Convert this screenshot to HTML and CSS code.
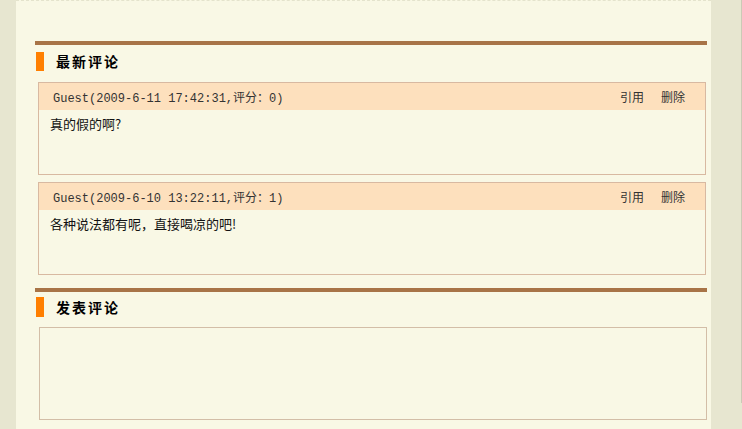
FILE: index.html
```html
<!DOCTYPE html>
<html lang="zh">
<head>
<meta charset="utf-8">
<title>评论</title>
<link rel="stylesheet" href="styles.css">
</head>
<body>
<div class="page">
  <aside class="side-left"></aside>
  <main class="main">
    <section class="block block--first">
      <div class="block-rule"></div>
      <h2 class="block-title">最新评论</h2>
      <div class="comment">
        <div class="comment-head">
          <span class="comment-meta">Guest(2009-6-11 17:42:31,评分：0)</span>
          <span class="comment-actions"><a class="action">引用</a><a class="action">删除</a></span>
        </div>
        <div class="comment-body">真的假的啊?</div>
      </div>
      <div class="comment">
        <div class="comment-head">
          <span class="comment-meta">Guest(2009-6-10 13:22:11,评分：1)</span>
          <span class="comment-actions"><a class="action">引用</a><a class="action">删除</a></span>
        </div>
        <div class="comment-body">各种说法都有呢，直接喝凉的吧!</div>
      </div>
    </section>
    <section class="block">
      <div class="block-rule"></div>
      <h2 class="block-title block-title--form">发表评论</h2>
      <div class="post-box"></div>
    </section>
  </main>
  <aside class="side-right"><div class="rail"></div></aside>
</div>
</body>
</html>
```
FILE: styles.css
```css
html, body {
  margin: 0;
  padding: 0;
  background: #e7e6d0;
  height: 100%;
}
body {
  font-family: "Noto Sans CJK SC", "Liberation Sans", sans-serif;
  color: #222;
}
.page {
  display: flex;
  width: 742px;
  height: 429px;
  overflow: hidden;
}
.side-left {
  width: 16px;
  flex: none;
  background: #e7e6d0;
}
.main {
  width: 695px;
  flex: none;
  box-sizing: border-box;
  background: #f9f8e5;
  border-top: 1px dashed #e4e3cc;
  padding: 40px 4px 0 19px;
}
.side-right {
  width: 31px;
  flex: none;
  display: flex;
  justify-content: flex-end;
  background: #e7e6d0;
}
.rail {
  width: 1px;
  height: 403px;
  background: #cbcab6;
}
.block {
  margin-top: 13px;
}
.block--first {
  margin-top: 0;
}
.block-rule {
  height: 4px;
  background: #a87447;
}
.block-title {
  margin: 7px 0 11px 1px;
  height: 19px;
  line-height: 19px;
  border-left: 8px solid #ff7f00;
  padding-left: 12px;
  font-size: 14px;
  font-weight: bold;
  letter-spacing: 2px;
  color: #000;
}
.block-title--form {
  margin-top: 5px;
  height: 20px;
  line-height: 20px;
  margin-bottom: 10px;
}
.comment {
  margin: 0 1px 7px 3px;
  border: 1px solid #d8b9a1;
}
.comment-head {
  display: flex;
  justify-content: space-between;
  align-items: center;
  height: 27px;
  padding: 0 20px 0 14px;
  background: #fde0bd;
  font-size: 12px;
  color: #333;
}
.comment-meta {
  font-family: "Liberation Mono", "Noto Sans CJK SC", monospace;
}
.comment-actions {
  display: flex;
  gap: 17px;
}
.action {
  color: #333;
  text-decoration: none;
}
.comment-body {
  height: 64px;
  box-sizing: border-box;
  padding: 5px 11px;
  font-size: 13px;
  line-height: 18px;
  color: #111;
}
.post-box {
  margin-left: 4px;
  height: 93px;
  box-sizing: border-box;
  border: 1px solid #d3bea7;
  background: #f9f8e5;
}
```
